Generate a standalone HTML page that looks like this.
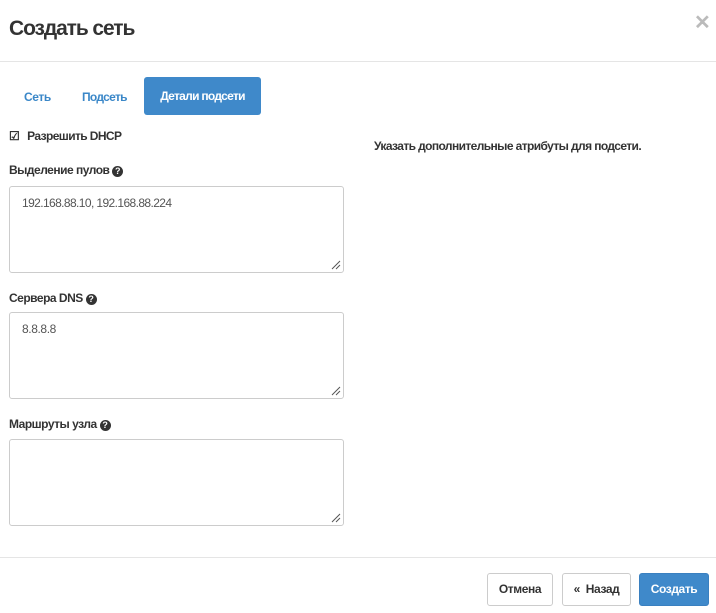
<!DOCTYPE html>
<html><head><meta charset="utf-8"><style>
*{box-sizing:border-box;margin:0;padding:0}
body{width:716px;height:613px;background:#fff;font-family:"Liberation Sans",sans-serif;color:#333;position:relative;overflow:hidden;letter-spacing:-0.4px}
.a{position:absolute;white-space:nowrap}
.hr{position:absolute;left:0;width:716px;height:1px;background:#e5e5e5}
.ta{position:absolute;left:9px;width:335px;height:87px;border:1px solid #ccc;border-radius:3px;font-size:12px;color:#555;padding:9px 12px}
.ta svg{position:absolute;right:2px;bottom:2px}
.lbl{font-size:12px;font-weight:bold;color:#333}
.q{display:inline-block;width:11px;height:11px;border-radius:50%;background:#333;color:#fff;font-size:9px;text-align:center;line-height:11px;vertical-align:0px;margin-left:0px;letter-spacing:0}
.btn{position:absolute;top:573px;height:33px;border:1px solid #ccc;border-radius:3px;font-size:12px;font-weight:bold;text-align:center;line-height:31px;color:#333}
</style></head><body>
<div class="a" style="left:9px;top:17px;font-size:21px;color:#333;font-weight:bold;letter-spacing:-1.1px">Создать сеть</div>
<div class="a" style="left:694px;top:10px;font-size:20px;color:#bbb;font-weight:bold">✕</div>
<div class="hr" style="top:61px"></div>
<div class="a" style="left:24px;top:90px;font-size:12px;font-weight:bold;color:#3a87c8">Сеть</div>
<div class="a" style="left:82px;top:90px;font-size:12px;font-weight:bold;color:#3a87c8;letter-spacing:-0.7px">Подсеть</div>
<div class="a" style="left:144px;top:77px;width:117px;height:38px;background:#3f89ca;border-radius:3px;color:#fff;font-size:12px;font-weight:bold;text-align:center;line-height:38px;letter-spacing:-0.7px">Детали подсети</div>
<div class="a lbl" style="left:9px;top:129px;letter-spacing:-0.6px"><span style="font-size:12px;margin-right:8px">☑</span>Разрешить DHCP</div>
<div class="a" style="left:374px;top:139px;font-size:12px;font-weight:bold;letter-spacing:-0.6px">Указать дополнительные атрибуты для подсети.</div>
<div class="a lbl" style="left:9px;top:163px;letter-spacing:-0.5px">Выделение пулов <span class="q">?</span></div>
<div class="ta" style="top:186px;letter-spacing:-0.6px">192.168.88.10, 192.168.88.224<svg width="10" height="10"><path d="M1 9L9 1M5 9L9 5" stroke="#555" stroke-width="1"/></svg></div>
<div class="a lbl" style="left:9px;top:291px;letter-spacing:-0.5px">Сервера DNS <span class="q">?</span></div>
<div class="ta" style="top:312px">8.8.8.8<svg width="10" height="10"><path d="M1 9L9 1M5 9L9 5" stroke="#555" stroke-width="1"/></svg></div>
<div class="a lbl" style="left:9px;top:417px;letter-spacing:-0.5px">Маршруты узла <span class="q">?</span></div>
<div class="ta" style="top:439px"><svg width="10" height="10"><path d="M1 9L9 1M5 9L9 5" stroke="#555" stroke-width="1"/></svg></div>
<div class="hr" style="top:557px"></div>
<div class="btn" style="left:487px;width:66px">Отмена</div>
<div class="btn" style="left:562px;width:69px">« &nbsp;Назад</div>
<div class="btn" style="left:639px;width:70px;background:#3f89ca;border-color:#3a80c0;color:#fff">Создать</div>
</body></html>
